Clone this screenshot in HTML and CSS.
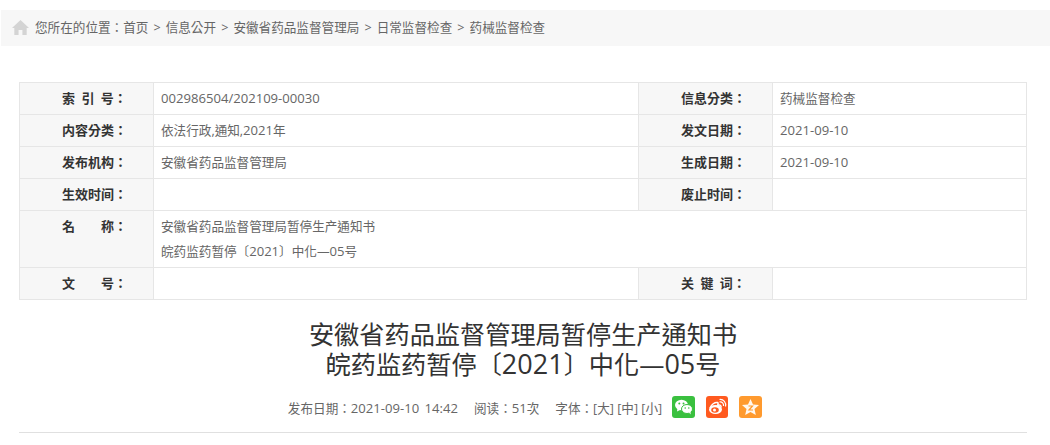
FILE: index.html
```html
<!DOCTYPE html>
<html>
<head>
<meta charset="utf-8">
<title>安徽省药品监督管理局暂停生产通知书</title>
<link rel="stylesheet" href="styles.css">
</head>
<body>
<nav class="crumb">
  <svg class="home" viewBox="0 0 16 14" width="17" height="15"><path d="M8 0 L16 7.4 L13.8 7.4 L13.8 14 L9.8 14 L9.8 9.4 L6.2 9.4 L6.2 14 L2.2 14 L2.2 7.4 L0 7.4 Z" fill="#d4d4d4"/></svg>
  <span>您所在的位置：首页 &gt; 信息公开 &gt; 安徽省药品监督管理局 &gt; 日常监督检查 &gt; 药械监督检查</span>
</nav>
<main class="main">
<table class="info">
  <colgroup><col class="c1"><col class="c2"><col class="c3"><col class="c4"></colgroup>
  <tr><th>索 引 号：</th><td><span class="n">002986504/202109-00030</span></td><th>信息分类：</th><td>药械监督检查</td></tr>
  <tr><th>内容分类：</th><td>依法行政,通知,<span class="n">2021</span>年</td><th>发文日期：</th><td><span class="n">2021-09-10</span></td></tr>
  <tr><th>发布机构：</th><td>安徽省药品监督管理局</td><th>生成日期：</th><td><span class="n">2021-09-10</span></td></tr>
  <tr><th>生效时间：</th><td></td><th>废止时间：</th><td></td></tr>
  <tr class="name"><th>名　　称：</th><td colspan="3"><p>安徽省药品监督管理局暂停生产通知书</p><p>皖药监药暂停〔<span class="n">2021</span>〕中化—<span class="n">05</span>号</p></td></tr>
  <tr><th>文　　号：</th><td></td><th>关 键 词：</th><td></td></tr>
</table>
<h1 class="title">安徽省药品监督管理局暂停生产通知书<br>皖药监药暂停〔<span class="tn">2021</span>〕中化—<span class="tn">05</span>号</h1>
<div class="meta">
  <span>发布日期：<span class="n stamp">2021-09-10 14:42</span></span>
  <span>阅读：<span class="n">51</span>次</span>
  <span>字体：[大] [中] [小]</span>
  <div class="share">
    <svg class="ico" viewBox="0 0 23 22" width="23" height="22"><rect width="23" height="22" rx="3" fill="#3ac03f"/><ellipse cx="9.500" cy="9" rx="6.500" ry="5.200" fill="#fff"/><path d="M5.500 12 L5 15.500 L9 13.500 Z" fill="#fff"/><ellipse cx="15" cy="13" rx="5.500" ry="4.500" fill="#fff" stroke="#3ac03f" stroke-width="1"/><path d="M17 16.500 L18.800 18.500 L18.300 15 Z" fill="#fff"/><circle cx="7.300" cy="7.500" r="1" fill="#3ac03f"/><circle cx="11.500" cy="7.500" r="1" fill="#3ac03f"/><circle cx="13.200" cy="12" r=".8" fill="#3ac03f"/><circle cx="16.800" cy="12" r=".8" fill="#3ac03f"/></svg>
    <svg class="ico" viewBox="0 0 22 22" width="22" height="22"><rect width="22" height="22" rx="3" fill="#ff5a1f"/><ellipse cx="9.500" cy="13.500" rx="6.500" ry="4.500" fill="#fff"/><path d="M4 12 C5 8.500 9 6 11.500 6.500 C12.500 7 12 8.500 11.500 9.500 C14 8.500 15.500 9.500 15 11.500" fill="none" stroke="#fff" stroke-width="1.500"/><ellipse cx="9" cy="14" rx="3.800" ry="2.800" fill="#ff5a1f"/><circle cx="8.500" cy="14" r="1.500" fill="#fff"/><path d="M13.500 6 C16 5.500 18 7.500 17.500 10 M13.500 3.500 C17.500 3 20.500 6.500 19.500 10.500" fill="none" stroke="#fff" stroke-width="1.200"/></svg>
    <svg class="ico" viewBox="0 0 23 22" width="23" height="22"><rect width="23" height="22" rx="3" fill="#ff9a2e"/><path d="M11.500 3 L14 8.400 L20 9 L15.500 13 L16.800 19 L11.500 16 L6.200 19 L7.500 13 L3 9 L9 8.400 Z" fill="#fff" opacity=".92"/><path d="M9.500 10 H13.500 L10 14 H14" fill="none" stroke="#ff9a2e" stroke-width="1.200"/></svg>
  </div>
</div>
<hr class="rule">
</main>
</body>
</html>
```
FILE: styles.css
```css
* { box-sizing: border-box; }
html, body { margin: 0; padding: 0; }
body {
  padding-top: 10px;
  background: #fff;
  color: #666;
  font-family: "Open Sans", "Noto Sans CJK TC", sans-serif;
  font-size: 12.6px;
  overflow: hidden;
}
.n { font-size: 13.1px; }
.stamp { word-spacing: 2px; }
.crumb {
  display: flex;
  align-items: center;
  gap: 6px;
  height: 36px;
  margin-left: 1px;
  padding-left: 11px;
  padding-bottom: 4px;
  background: #f7f7f7;
  color: #666;
  word-spacing: 1.8px;
}
.home { flex: none; margin-top: 3px; }
.main { padding: 36px 23px 0 19px; }
.info {
  width: 1007px;
  table-layout: fixed;
  border-collapse: collapse;
}
.c1, .c3 { width: 134px; }
.c2 { width: 485px; }
.c4 { width: 254px; }
.info th, .info td {
  height: 32px;
  border: 1px solid #e6e6e6;
  padding: 0 7px;
  font-size: 12.6px;
  line-height: 25px;
}
.info th {
  padding-left: 42px;
  padding-right: 0;
  background: #f7f7f7;
  color: #333;
  font-size: 13px;
  font-weight: bold;
  text-align: left;
  word-spacing: 3px;
}
.info td { color: #666; text-align: left; }
.name th { vertical-align: top; padding-top: 3px; }
.name td { padding-top: 3px; padding-bottom: 3px; }
.info p { margin: 0; }
.title {
  margin: 19px 0 0;
  font-size: 25.2px;
  line-height: 30px;
  font-weight: normal;
  color: #333;
  text-align: center;
}
.tn { font-size: 27px; }
.meta {
  display: flex;
  justify-content: center;
  align-items: center;
  gap: 16px;
  margin-top: 17px;
  height: 22px;
  padding-left: 4px;
  color: #666;
}
.share { display: flex; gap: 11px; margin-left: -6px; }
.ico { display: block; }
.rule {
  height: 1px;
  margin: 14px 0 0;
  border: 0;
  background: #e0e0e0;
}
```
